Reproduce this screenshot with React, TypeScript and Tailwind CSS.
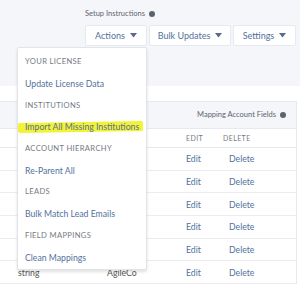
import React from "react";

const menu: { label: string; type: "head" | "item"; marked?: boolean }[] = [
  { label: "YOUR LICENSE", type: "head" },
  { label: "Update License Data", type: "item" },
  { label: "INSTITUTIONS", type: "head" },
  { label: "Import All Missing Institutions", type: "item", marked: true },
  { label: "ACCOUNT HIERARCHY", type: "head" },
  { label: "Re-Parent All", type: "item" },
  { label: "LEADS", type: "head" },
  { label: "Bulk Match Lead Emails", type: "item" },
  { label: "FIELD MAPPINGS", type: "head" },
  { label: "Clean Mappings", type: "item" },
];

const rows = [
  { field: "", account: "" },
  { field: "", account: "" },
  { field: "", account: "" },
  { field: "", account: "" },
  { field: "", account: "" },
  { field: "string", account: "AgileCo" },
];

function Caret() {
  return (
    <svg width="7" height="5" viewBox="0 0 7 5" className="ml-[5px]">
      <path d="M0 0h7L3.5 4.5z" fill="#5a6b85" />
    </svg>
  );
}

function InfoDot() {
  return <span className="inline-block w-[6px] h-[6px] rounded-full bg-[#5c6370] ml-[4px]" />;
}

function DropButton({ label, width }: { label: string; width: string }) {
  return (
    <button
      className={`${width} h-[21px] flex items-center justify-center bg-white border border-[#e6e9ed] rounded-[2px] text-[9px] text-[#52719c]`}
    >
      {label}
      <Caret />
    </button>
  );
}

export default function App() {
  return (
    <div
      className="relative w-[300px] h-[286px] overflow-hidden bg-white"
      style={{ fontFamily: "Lato, 'Open Sans', sans-serif" }}
    >
      {/* top bar */}
      <div className="h-[86px] bg-[#f4f6f9] flex justify-end pr-[4px] pt-[9px]">
        <div className="flex flex-col">
          <div className="flex items-center text-[7.5px] text-[#5f6470] h-[10px]">
            Setup Instructions
            <InfoDot />
          </div>
          <div className="flex gap-[2px] mt-[6px]">
            <DropButton label="Actions" width="w-[62px]" />
            <DropButton label="Bulk Updates" width="w-[82px]" />
            <DropButton label="Settings" width="w-[63px]" />
          </div>
        </div>
      </div>

      {/* table card */}
      <div className="mt-[15px] mr-[3px] border-t border-r border-[#e6e9ed]">
        <div className="h-[27px] bg-[#f4f6f9] border-b border-[#e6e9ed] flex items-center justify-end pr-[10px] text-[7.5px] text-[#5f6470]">
          Mapping Account Fields
          <InfoDot />
        </div>
        <div className="h-[19px] border-b border-[#e6e9ed] flex items-center text-[7px] tracking-[0.4px] text-[#767a82]">
          <span className="ml-[186px] w-[37px]">EDIT</span>
          <span>DELETE</span>
        </div>
        {rows.map((r, i) => (
          <div
            key={i}
            className="h-[22.7px] border-b border-[#eaecef] flex items-center text-[8.7px] text-[#52719c]"
          >
            <span className="ml-[18px] w-[89px] text-[#555]">{r.field}</span>
            <span className="w-[79px] text-[#555]">{r.account}</span>
            <span className="w-[43px]">Edit</span>
            <span>Delete</span>
          </div>
        ))}
      </div>

      {/* actions dropdown */}
      <div className="absolute left-[17px] top-[47px] w-[130px] h-[223px] bg-white border border-[#e1e4e8] rounded-[2px] shadow-[0_2px_3px_rgba(0,0,0,0.12)] py-[3px]">
        {menu.map((m) => (
          <div key={m.label} className="relative h-[21.7px] flex items-center pl-[7px] whitespace-nowrap">
            {m.marked && (
              <div className="absolute left-[0px] top-[6px] w-[125px] h-[10px] bg-[#f4f236] -rotate-[1deg] rounded-[2px]" />
            )}
            <span
              className={
                m.type === "head"
                  ? "relative text-[7.6px] tracking-[0.35px] text-[#767a82]"
                  : "relative text-[8.7px] text-[#52719c]"
              }
            >
              {m.label}
            </span>
          </div>
        ))}
      </div>
    </div>
  );
}
